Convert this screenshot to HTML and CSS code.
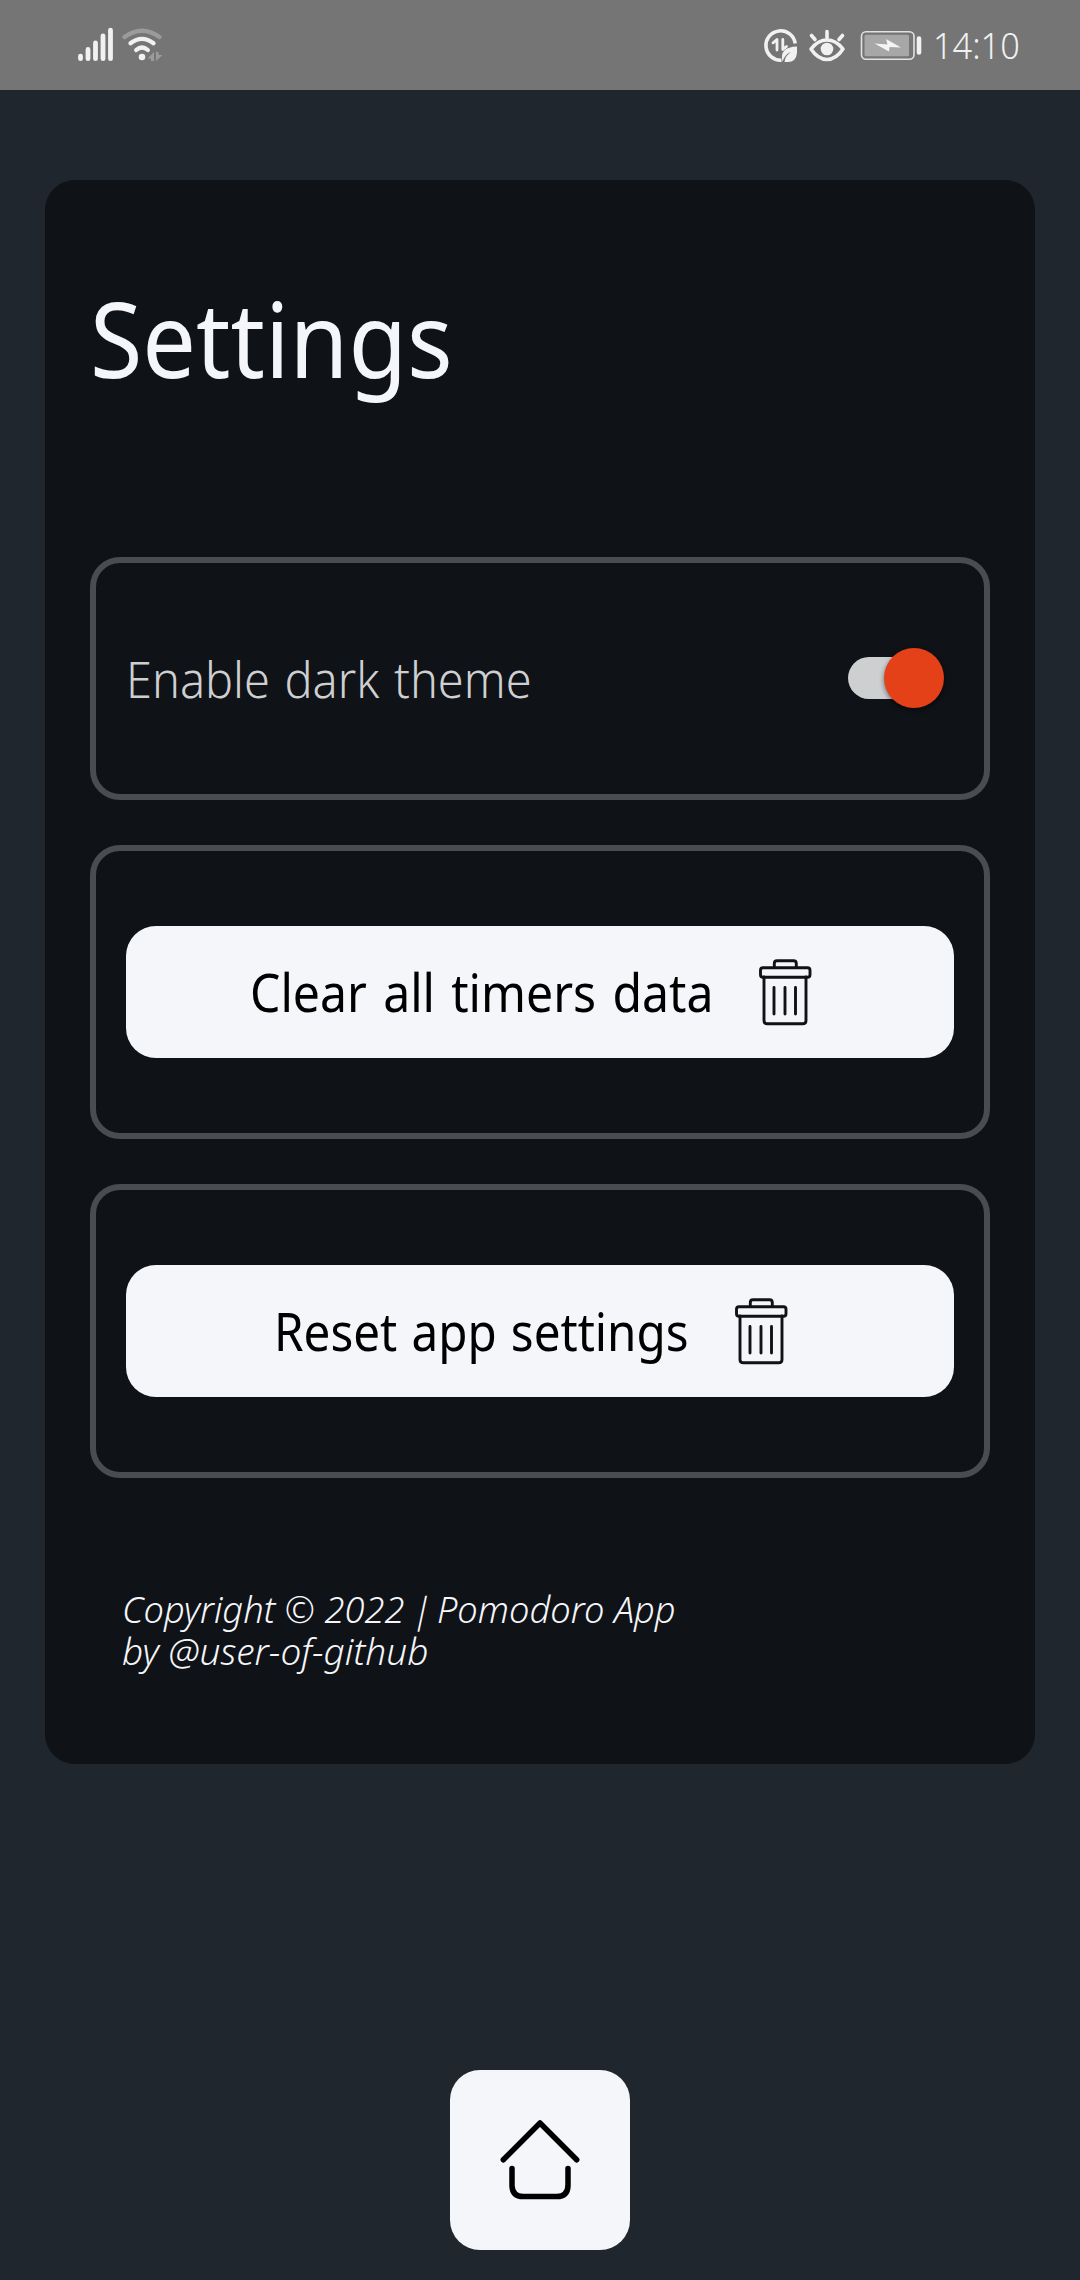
FILE: index.html
```html
<!DOCTYPE html>
<html lang="en">
<head>
<meta charset="utf-8">
<title>Pomodoro App – Settings</title>
<link rel="stylesheet" href="styles.css">
</head>
<body>
<header class="status">
  <svg class="status-left" width="90" height="32" viewBox="76 26 90 32" fill="none" stroke-linecap="round">
    <path d="M80.500 56.200V58.700M88 49.500V58.700M95.500 43V58.700M103 36V58.700M110.500 30.200V58.700" stroke="#f1f1f1" stroke-width="4.800"/>
    <path d="M124.500 37Q142 24.500 159.500 37" stroke="#9b9b9b" stroke-width="4.300"/>
    <path d="M130.500 43.300Q142 34.500 153.500 43.300M136.200 50Q142 44.800 147.800 50" stroke="#f1f1f1" stroke-width="4.300"/>
    <circle cx="142" cy="57" r="3.300" fill="#f1f1f1"/>
    <path d="M148 58L154 52V61H151V58.500H148ZM156 52H158.500V55H162.500L156 61Z" fill="#9b9b9b"/>
  </svg>
  <div class="status-right">
    <svg class="status-icons" width="158" height="36" viewBox="764 28 158 36" fill="none" stroke-linecap="round">
      <path d="M781.500 60.200A14.700 14.700 0 1 1 795.200 43.500" stroke="#f1f1f1" stroke-width="3.600" stroke-linecap="butt"/>
      <path d="M773 42.800L777 39.500V50M782.800 39.500V49.500L786.500 46.500" stroke="#f1f1f1" stroke-width="2.800" stroke-linejoin="round"/>
      <path d="M797 46.500V53Q796 62 788 62H784.500Q785 56 791 52Q785 54 782.500 61.500Q779 47 797 46.500Z" fill="#f1f1f1"/>
      <path d="M811 49Q818 40 827 40T843 49Q836 59.500 827 59.500T811 49Z" stroke="#f1f1f1" stroke-width="3.600" stroke-linejoin="round"/>
      <circle cx="827" cy="49" r="6.300" fill="#f1f1f1"/>
      <path d="M811.500 35.500L815 39.500M827 31.500V38M842.500 35.500L839 39.500" stroke="#f1f1f1" stroke-width="3.600"/>
      <rect x="861.500" y="31.800" width="52.500" height="27.500" rx="4.500" stroke="#e2e2e2" stroke-width="1.600"/>
      <rect x="864.500" y="34.800" width="44.500" height="21.500" rx="1.500" fill="#a7a7a7"/>
      <path d="M874.500 43.500L887.500 44.500L886 39L901 47.500L889.500 47L889 51.500Z" fill="#f4f4f4"/>
      <path d="M919 38.500V52.500" stroke="#f1f1f1" stroke-width="4.600"/>
    </svg>
    <span class="clock"><span class="fit fit-clock">14:10</span></span>
  </div>
</header>
<main class="card">
  <h1 class="title"><span class="fit fit-title">Settings</span></h1>
  <div class="groups">
    <section class="group group-toggle">
      <span class="label"><span class="fit fit-label">Enable dark theme</span></span>
      <span class="switch"><span class="thumb"></span></span>
    </section>
    <section class="group">
      <button class="action">
        <span class="action-text clear"><span class="fit fit-clear">Clear all timers data</span></span>
        <svg class="trash" width="80" height="80" viewBox="0 0 80 80"><g fill="none" stroke="#111214" stroke-width="2.900" stroke-linecap="round" stroke-linejoin="round"><path d="M19 25V68.500Q19 71.800 22.300 71.800H57.700Q61 71.800 61 68.500V25M29.300 15.500V11.500Q29.300 8.700 32 8.700H48.500Q51.300 8.700 51.300 11.500V15.500M29 35.500V62M40 35.500V62M50.500 35.500V62"/><rect x="15.500" y="15.700" width="49.500" height="9.500" rx="2.500"/></g></svg>
      </button>
    </section>
    <section class="group">
      <button class="action">
        <span class="action-text reset"><span class="fit fit-reset">Reset app settings</span></span>
        <svg class="trash" width="80" height="80" viewBox="0 0 80 80"><g fill="none" stroke="#111214" stroke-width="2.900" stroke-linecap="round" stroke-linejoin="round"><path d="M19 25V68.500Q19 71.800 22.300 71.800H57.700Q61 71.800 61 68.500V25M29.300 15.500V11.500Q29.300 8.700 32 8.700H48.500Q51.300 8.700 51.300 11.500V15.500M29 35.500V62M40 35.500V62M50.500 35.500V62"/><rect x="15.500" y="15.700" width="49.500" height="9.500" rx="2.500"/></g></svg>
      </button>
    </section>
  </div>
  <footer class="credit">
    <span class="fit fit-copy">Copyright © 2022 <span class="bar">|</span> Pomodoro App</span>
    <span class="fit fit-by">by @user-of-github</span>
  </footer>
</main>
<nav class="nav">
  <button class="home" aria-label="Home">
    <svg width="90" height="90" viewBox="0 0 90 90" fill="none" stroke="#000" stroke-width="5.500" stroke-linecap="round" stroke-linejoin="round"><path d="M8.300 44.800L45 8L81.700 44.800M17 53.500V71Q17.500 81.500 28 81.500H62Q72.500 81.500 73 71V53.500"/></svg>
  </button>
</nav>
</body>
</html>
```
FILE: styles.css
```css
* { box-sizing: border-box; }
body {
  margin: 0;
  height: 2280px;
  display: flex;
  flex-direction: column;
  background: #1f262d;
  font-family: "Noto Sans", "Open Sans", sans-serif;
  overflow: hidden;
}
.status {
  height: 90px;
  flex: none;
  display: flex;
  align-items: flex-start;
  justify-content: space-between;
  padding: 28px 58px 0 76px;
  background: #757575;
}
.status-left { overflow: visible; margin-top: -2px; }
.status-right { display: flex; }
.status-icons { overflow: visible; }
.clock {
  width: 100px;
  padding-left: 11px;
  font-size: 37.5px;
  font-weight: 300;
  line-height: 34px;
  color: #f1f1f1;
  white-space: nowrap;
}
.card {
  flex: none;
  height: 1584px;
  margin: 90px 45px 0;
  padding: 0 45px;
  border-radius: 30px;
  background: #0f1216;
}
.title {
  margin: 0;
  height: 377px;
  padding-top: 86px;
  font-size: 105px;
  font-weight: 400;
  line-height: 144px;
  color: #f5f6fa;
}
.fit {
  display: inline-block;
  white-space: pre;
  transform-origin: 0 50%;
}
.fit-clock { transform: scaleX(0.915); }
.fit-title { transform: scaleX(0.908); }
.fit-label { transform: scaleX(0.957); word-spacing: 2.5px; }
.fit-clear { transform: scaleX(0.926); word-spacing: 4px; }
.fit-reset { transform: scaleX(0.915); word-spacing: 2px; }
.fit-copy { transform: scaleX(1.008); }
.fit-by { transform: scaleX(1.028); }
.bar {
  display: inline-block;
  margin: 0 -4px 0 -2px;
  transform: skewX(-12deg);
}
.groups { display: flex; flex-direction: column; gap: 45px; }
.group {
  height: 294px;
  display: flex;
  align-items: center;
  padding: 0 30px;
  border: 6px solid #4a4d50;
  border-radius: 30px;
}
.group-toggle { height: 243px; justify-content: space-between; }
.label {
  padding-top: 1px;
  font-size: 49px;
  font-weight: 300;
  line-height: 66px;
  color: #cecfd1;
}
.switch {
  width: 84px;
  height: 42px;
  margin: 0 22px 1px 0;
  display: flex;
  align-items: center;
  border-radius: 21px;
  background: #cecfd1;
}
.thumb {
  flex: none;
  width: 60px;
  height: 60px;
  margin-left: 36px;
  border-radius: 50%;
  background: #e54118;
  box-shadow: 0 2px 5px rgba(0, 0, 0, 0.5);
}
.action {
  width: 828px;
  height: 132px;
  display: flex;
  align-items: center;
  justify-content: center;
  gap: 36px;
  padding: 0 5px 0 0;
  border: 0;
  border-radius: 30px;
  background: #f5f6fa;
  font: 400 52px/72px "Noto Sans", "Open Sans", sans-serif;
  color: #000;
}
.action-text { text-align: left; white-space: nowrap; }
.clear { width: 459px; }
.reset { width: 411px; }
.trash { flex: none; }
.credit {
  display: flex;
  flex-direction: column;
  align-items: flex-start;
  padding: 111px 0 0 32px;
  font-size: 36px;
  font-style: italic;
  font-weight: 300;
  line-height: 42px;
  color: #f5f6fa;
}
.nav {
  flex: 1;
  display: flex;
  align-items: flex-end;
  justify-content: center;
  padding-bottom: 30px;
}
.home {
  width: 180px;
  height: 180px;
  display: grid;
  place-items: center;
  padding: 0;
  border: 0;
  border-radius: 30px;
  background: #f5f6fa;
}
```
